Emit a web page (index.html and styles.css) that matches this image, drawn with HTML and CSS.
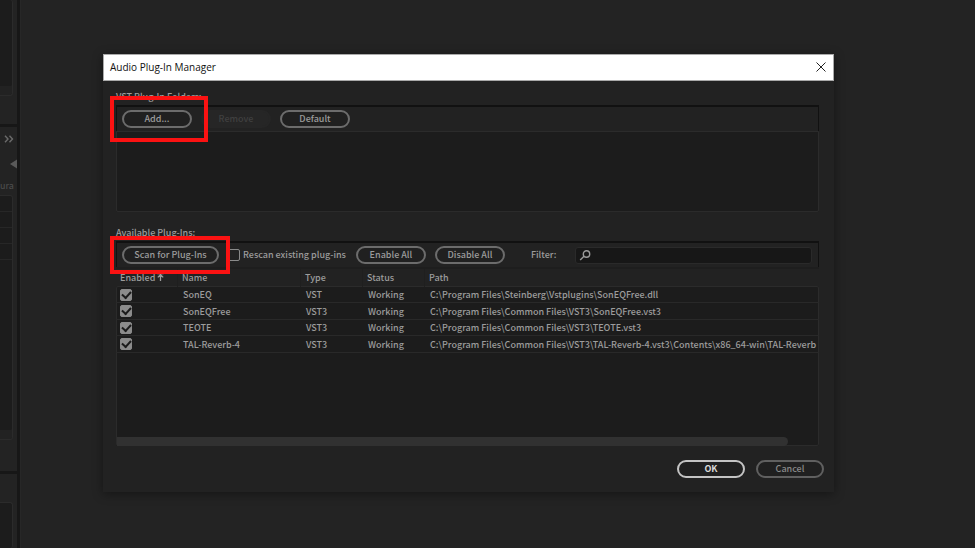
FILE: index.html
```html
<!DOCTYPE html>
<html lang="en">
<head>
<meta charset="utf-8">
<title>Audio Plug-In Manager</title>
<link rel="stylesheet" href="styles.css">
</head>
<body>
<aside class="dock">
  <section class="dock-panel dock-top">
    <div class="dock-list"></div>
  </section>
  <section class="dock-panel dock-middle">
    <svg class="icon more" viewBox="0 0 10 8"><path d="M1 .8 4 4 1 7.200M5.500.8 8.500 4 5.500 7.200"/></svg>
    <svg class="icon back" viewBox="0 0 7 10"><path d="M7 .5v9L0 5z"/></svg>
    <div class="dock-label">ura</div>
    <div class="dock-list">
      <div class="dock-row"></div>
      <div class="dock-row"></div>
      <div class="dock-row"></div>
      <div class="dock-row"></div>
    </div>
  </section>
  <section class="dock-panel dock-bottom">
    <div class="dock-list"></div>
  </section>
</aside>
<main class="workspace">
  <div class="dialog" role="dialog" aria-labelledby="dialog-title">
    <header class="titlebar">
      <h1 id="dialog-title">Audio Plug-In Manager</h1>
      <button class="close" type="button" aria-label="Close"><svg viewBox="0 0 10 10"><path d="M.5.5l9 9M9.500.5l-9 9"/></svg></button>
    </header>
    <div class="content">
      <h2 class="label">VST Plug-In Folders:</h2>
      <div class="toolbar">
        <span class="marked marked-add"><button class="btn" type="button">Add...</button></span>
        <button class="btn" type="button" disabled>Remove</button>
        <button class="btn" type="button">Default</button>
      </div>
      <div class="folders"></div>
      <h2 class="label">Available Plug-Ins:</h2>
      <div class="toolbar">
        <span class="marked marked-scan"><button class="btn btn-scan" type="button">Scan for Plug-Ins</button></span>
        <label class="rescan"><input class="check" type="checkbox">Rescan existing plug-ins</label>
        <button class="btn" type="button">Enable All</button>
        <button class="btn" type="button">Disable All</button>
        <label class="filter-label" for="filter">Filter:</label>
        <div class="search">
          <svg viewBox="0 0 12 11"><circle cx="7.500" cy="4" r="3.200"/><path d="M5 6.300 1.200 10"/></svg>
          <input id="filter" type="text">
        </div>
      </div>
      <div class="plugins">
        <table>
          <colgroup><col class="c-enabled"><col class="c-name"><col class="c-type"><col class="c-status"><col></colgroup>
          <thead>
            <tr><th>Enabled <svg class="sort" viewBox="0 0 7 8"><path d="M3.500 8V2M.8 4.400 3.500 1.700l2.700 2.700M.3.700h6.400"/></svg></th><th>Name</th><th>Type</th><th>Status</th><th>Path</th></tr>
          </thead>
          <tbody>
            <tr><td><input class="check" type="checkbox" aria-label="Enable SonEQ" checked></td><td>SonEQ</td><td>VST</td><td>Working</td><td>C:\Program Files\Steinberg\Vstplugins\SonEQFree.dll</td></tr>
            <tr><td><input class="check" type="checkbox" aria-label="Enable SonEQFree" checked></td><td>SonEQFree</td><td>VST3</td><td>Working</td><td>C:\Program Files\Common Files\VST3\SonEQFree.vst3</td></tr>
            <tr><td><input class="check" type="checkbox" aria-label="Enable TEOTE" checked></td><td>TEOTE</td><td>VST3</td><td>Working</td><td>C:\Program Files\Common Files\VST3\TEOTE.vst3</td></tr>
            <tr><td><input class="check" type="checkbox" aria-label="Enable TAL-Reverb-4" checked></td><td>TAL-Reverb-4</td><td>VST3</td><td>Working</td><td>C:\Program Files\Common Files\VST3\TAL-Reverb-4.vst3\Contents\x86_64-win\TAL-Reverb</td></tr>
          </tbody>
        </table>
        <div class="scrollbar"></div>
      </div>
      <footer class="actions">
        <button class="btn btn-primary" type="button">OK</button>
        <button class="btn btn-quiet" type="button">Cancel</button>
      </footer>
    </div>
  </div>
</main>
</body>
</html>
```
FILE: styles.css
```css
* { box-sizing: border-box; }

body {
  margin: 0;
  min-height: 100vh;
  display: flex;
  background: #232323;
  color: #9c9c9c;
  font: 500 9px/14px "Noto Sans CJK JP", sans-serif;
  overflow: hidden;
}

button, input { font: inherit; color: inherit; }
svg { display: block; fill: none; stroke: currentColor; }

/* Docked panels at the left edge */
.dock {
  flex: none;
  width: 21px;
  height: 100vh;
  display: flex;
  flex-direction: column;
  gap: 3px;
  background: #171717;
  border-right: 1px solid #272727;
  padding-right: 3px;
  overflow: hidden;
}
.dock-panel {
  flex: none;
  display: flex;
  flex-direction: column;
  background: #232323;
  padding-right: 4px;
}
.dock-list {
  flex: 1;
  background: #1c1c1c;
  border: 1px solid #2b2b2b;
  border-left: 0;
  border-radius: 0 3px 3px 0;
  box-shadow: inset 0 -9px #222;
}
.dock-top { height: 124px; padding-bottom: 28px; }
.dock-top .dock-list { border-top: 0; }
.dock-middle { height: 344px; padding-bottom: 31px; }
.dock-bottom { flex: 1; padding-top: 28px; }
.dock-bottom .dock-list { border-bottom: 0; box-shadow: none; }
.dock-row { height: 16px; border-bottom: 1px solid #272727; }
.dock-label { height: 16px; color: #505050; margin: 10px 0 0; font-weight: 400; }
.icon { flex: none; color: #6b6b6b; }
.more { width: 10px; height: 8px; margin: 8px 0 0 4px; stroke-width: 1.400; }
.back { width: 7px; height: 10px; margin: 16px 0 0 10px; fill: #5a5a5a; stroke: none; }

/* Dialog window */
.workspace { flex: 1; min-width: 0; padding: 54px 141px 56px 82px; }
.dialog {
  background: #222;
  box-shadow: 0 2px 10px rgba(0, 0, 0, .4);
}
.titlebar {
  display: flex;
  align-items: center;
  justify-content: space-between;
  height: 27px;
  padding: 0 7px 2px 6px;
  background: #fff;
  border: 1px solid #aaa;
  color: #111;
}
.titlebar h1 { margin: 0; font: 500 10px/16px "Open Sans", sans-serif; }
.close { padding: 0; border: 0; background: none; color: #222; }
.close svg { width: 10px; height: 10px; }

.content { padding: 7px 15px 14px 13px; }
.label { margin: 0; height: 17px; font: inherit; line-height: 18px; }
.toolbar {
  display: flex;
  align-items: center;
  gap: 9px;
  height: 26px;
  padding: 0 6px 0 5px;
  border: 1px solid #111;
  border-top-width: 2px;
  border-bottom: 0;
}
.folders {
  height: 81px;
  margin-bottom: 12px;
  background: #1c1c1c;
  border: 1px solid #2b2b2b;
  border-radius: 0 0 2px 2px;
}

.btn {
  flex: none;
  display: block;
  width: 70px;
  height: 18px;
  padding: 0;
  background: #202020;
  border: 2px solid #6c6c6c;
  border-radius: 9px;
  line-height: 14px;
  text-align: center;
}
.btn:disabled { background: #262626; border-color: #262626; color: #404040; }
.btn-scan { width: 97px; }

.marked { position: relative; z-index: 1; flex: none; }
.marked::after {
  content: "";
  position: absolute;
  border: 4px solid #fb1212;
  pointer-events: none;
}
.marked-add::after { inset: -14px -16px -14px -12px; }
.marked-scan::after { inset: -10px -11px -10px -12px; }

.check {
  appearance: none;
  flex: none;
  display: block;
  width: 12px;
  height: 12px;
  margin: 0;
  border: 1px solid #8a8a8a;
  border-radius: 2px;
}
.check:checked {
  background: #8c8c8c;
  display: grid;
  place-items: center;
}
.check:checked::before {
  content: "";
  width: 7px;
  height: 4px;
  border: solid #1c1c1c;
  border-width: 0 0 2px 2px;
  transform: translateY(-1px) rotate(-48deg);
}
.rescan { flex: none; display: flex; align-items: center; gap: 3px; margin-right: 1px; }
.filter-label { flex: none; margin: 0 10px 0 17px; }
.search {
  flex: 1;
  display: flex;
  align-items: center;
  height: 17px;
  padding-left: 3px;
  background: #171717;
  border: 1px solid #2a2a2a;
  border-radius: 3px;
}
.search svg { flex: none; width: 12px; height: 11px; stroke-width: 1.400; }
.search input { flex: 1; min-width: 0; height: 100%; padding: 0 4px; border: 0; background: none; outline: 0; }

/* Plug-in table: the frame starts below the column headings */
.plugins { position: relative; height: 179px; border-top: 2px solid #1e1e1e; overflow: hidden; display: flex; flex-direction: column; }
.plugins::before {
  content: "";
  position: absolute;
  inset: 17px 0 0;
  background: #1c1c1c;
  border: 1px solid #2b2b2b;
  border-radius: 2px;
}
table { position: relative; width: 100%; table-layout: fixed; border-collapse: separate; border-spacing: 0; }
.c-enabled { width: 61px; }
.c-name { width: 123px; }
.c-type { width: 62px; }
.c-status { width: 62px; }
th, td { height: 16px; padding: 0 0 0 6px; text-align: left; white-space: nowrap; font-weight: inherit; line-height: 15px; overflow: hidden; }
th { height: 18px; padding-left: 4px; line-height: 17px; vertical-align: top; border-left: 1px solid #1f1f1f; }
th:first-child { border-left: 0; }
td { border-bottom: 1px solid #292929; }
td:first-child { padding-left: 4px; }
tr:nth-child(even) td { height: 17px; }
.sort { display: inline-block; width: 7px; height: 8px; stroke-width: 1.300; }
.scrollbar { position: relative; width: calc(100% - 32px); height: 9px; margin: auto 0 0 1px; border-radius: 0 5px 5px 0; background: #313131; }

.actions { display: flex; justify-content: flex-end; gap: 11px; margin: 14px -5px 0 0; }
.actions .btn { width: 68px; }
.btn-primary { border-color: #c4c4c4; color: #d8d8d8; font-weight: 700; }
.btn-quiet { border-color: #606060; color: #8a8a8a; }
```
